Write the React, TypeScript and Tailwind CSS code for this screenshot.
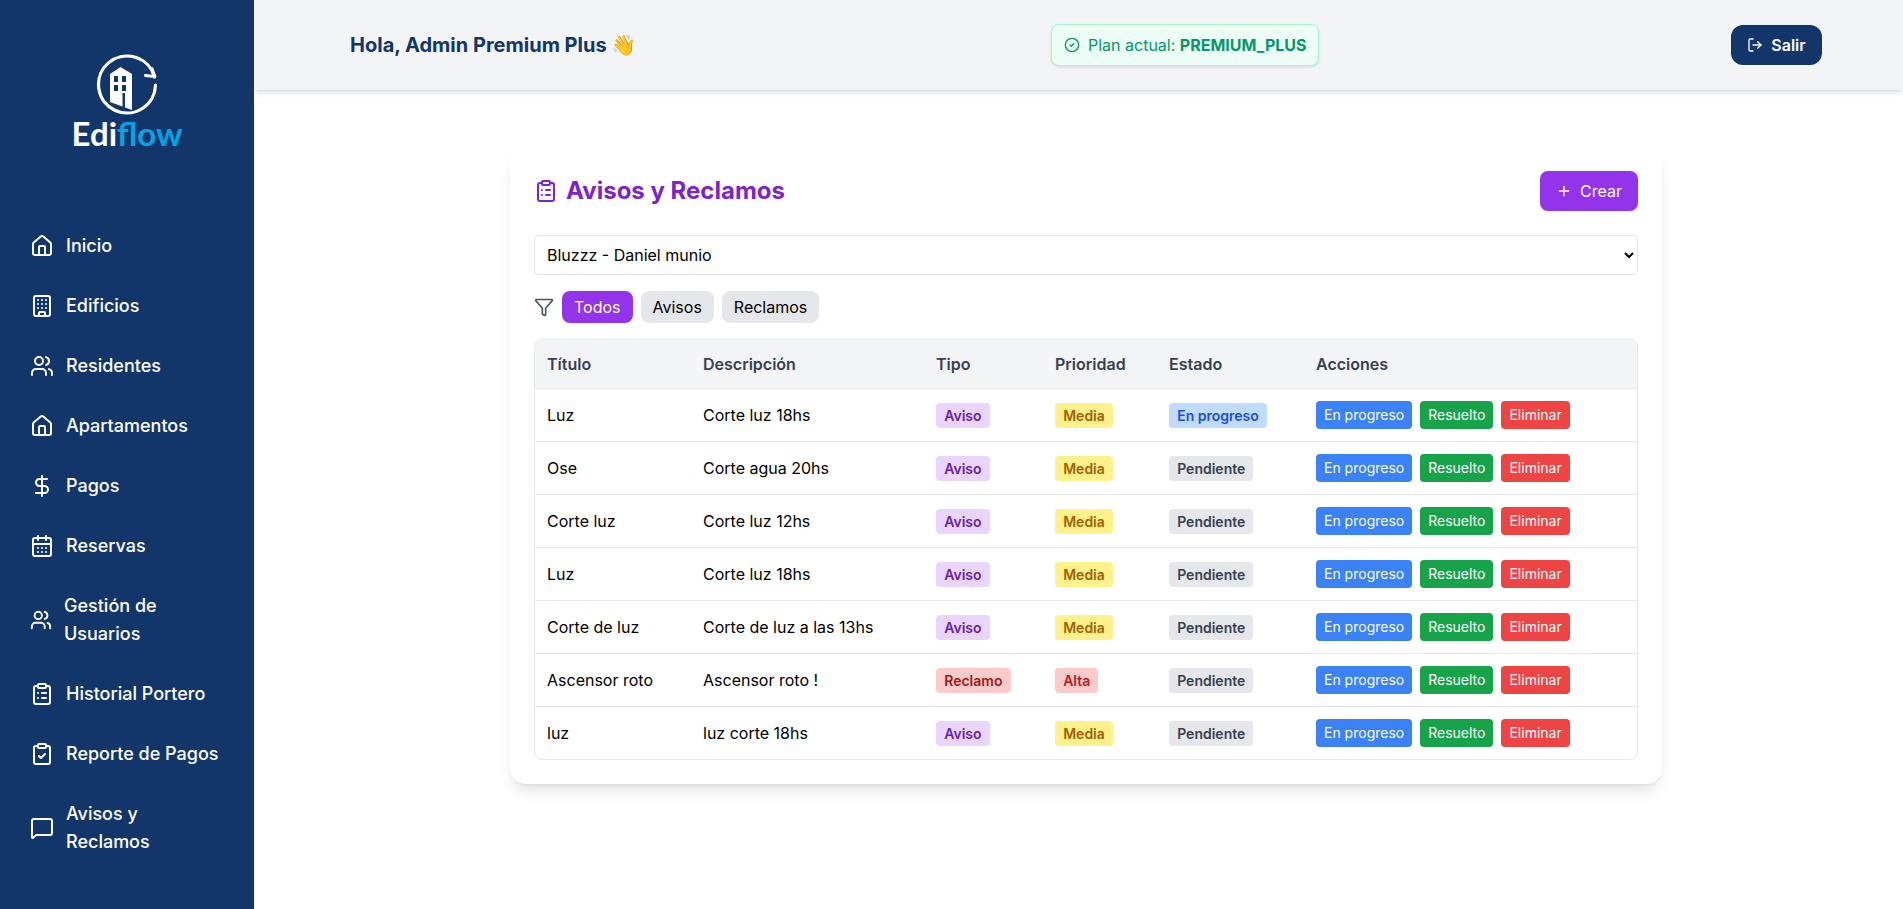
import { Building, CalendarDays, CircleCheck, ClipboardCheck, ClipboardList, DollarSign, Funnel, House, LogOut, MessageSquare, Plus, Users } from "lucide-react"
import type { ReactNode } from "react"

const navItems: { icon: ReactNode; label: ReactNode; tall?: boolean }[] = [
  { icon: <House size={24} />, label: "Inicio" },
  { icon: <Building size={24} />, label: "Edificios" },
  { icon: <Users size={24} />, label: "Residentes" },
  { icon: <House size={24} />, label: "Apartamentos" },
  { icon: <DollarSign size={24} />, label: "Pagos" },
  { icon: <CalendarDays size={24} />, label: "Reservas" },
  {
    icon: <Users size={22} />,
    label: (
      <>
        Gestión de
        <br />
        Usuarios
      </>
    ),
    tall: true,
  },
  { icon: <ClipboardList size={24} />, label: "Historial Portero" },
  { icon: <ClipboardCheck size={24} />, label: "Reporte de Pagos" },
  {
    icon: <MessageSquare size={24} />,
    label: (
      <>
        Avisos y
        <br />
        Reclamos
      </>
    ),
    tall: true,
  },
]

const tipoStyles: Record<string, string> = {
  Aviso: "bg-[#e9d5ff] text-[#6b21a8]",
  Reclamo: "bg-[#fecaca] text-[#991b1b]",
}

const prioridadStyles: Record<string, string> = {
  Media: "bg-[#fef08a] text-[#a16207]",
  Alta: "bg-[#fecaca] text-[#b91c1c]",
}

const estadoStyles: Record<string, string> = {
  "En progreso": "bg-[#bfdbfe] text-[#1d4ed8]",
  Pendiente: "bg-[#e5e7eb] text-[#374151]",
}

const rows = [
  { titulo: "Luz", descripcion: "Corte luz 18hs", tipo: "Aviso", prioridad: "Media", estado: "En progreso" },
  { titulo: "Ose", descripcion: "Corte agua 20hs", tipo: "Aviso", prioridad: "Media", estado: "Pendiente" },
  { titulo: "Corte luz", descripcion: "Corte luz 12hs", tipo: "Aviso", prioridad: "Media", estado: "Pendiente" },
  { titulo: "Luz", descripcion: "Corte luz 18hs", tipo: "Aviso", prioridad: "Media", estado: "Pendiente" },
  { titulo: "Corte de luz", descripcion: "Corte de luz a las 13hs", tipo: "Aviso", prioridad: "Media", estado: "Pendiente" },
  { titulo: "Ascensor roto", descripcion: "Ascensor roto !", tipo: "Reclamo", prioridad: "Alta", estado: "Pendiente" },
  { titulo: "luz", descripcion: "luz corte 18hs", tipo: "Aviso", prioridad: "Media", estado: "Pendiente" },
]

function Badge({ text, className }: { text: string; className: string }) {
  return <span className={`mt-px block h-[25px] w-fit rounded px-[8.2px] text-sm leading-[25px] font-semibold ${className}`}>{text}</span>
}

function Logo() {
  return (
    <div className="flex flex-col items-center">
      <svg width="64" height="64" viewBox="0 0 64 64" fill="none">
        <path d="M60.5 31 A28.5 28.5 0 1 1 59.5 23" stroke="white" strokeWidth="3.2" strokeLinecap="round" />
        <path d="M50.3 21.5 L60 22.5 L57 14.5" stroke="white" strokeWidth="2.8" strokeLinecap="round" strokeLinejoin="round" />
        <path d="M15 20 L25.5 13 L37 20 L37 56 L15 48 Z" fill="white" />
        <rect x="19" y="22" width="4" height="6" fill="#12366a" />
        <rect x="27" y="22" width="4" height="6" fill="#12366a" />
        <rect x="19" y="31" width="4" height="6" fill="#12366a" />
        <rect x="27" y="31" width="4" height="6" fill="#12366a" />
        <rect x="27.5" y="39" width="2.5" height="17" fill="#12366a" />
      </svg>
      <div className="font-[Lato,sans-serif] text-[33px] leading-[30px] font-bold">
        <span className="text-white">Edi</span>
        <span className="text-[#00a5e5]">flow</span>
      </div>
    </div>
  )
}

export default function App() {
  return (
    <div className="flex min-h-[909px] bg-white font-[Inter,sans-serif] text-black">
      <aside className="flex w-[254px] shrink-0 flex-col bg-[#12366a] pt-[54px] text-white">
        <Logo />
        <nav className="mt-[76px] flex flex-col gap-4 pl-[30px]">
          {navItems.map((item, i) => (
            <div key={i} className={`flex items-center gap-3 ${item.tall ? "h-[72px]" : "h-11"}`}>
              {item.icon}
              <span className="text-lg leading-7 font-medium whitespace-nowrap">{item.label}</span>
            </div>
          ))}
        </nav>
      </aside>

      <div className="flex min-w-0 flex-1 flex-col">
        <header className="flex h-[90px] items-center bg-[#f3f4f6] pr-[81px] pl-[96px] shadow-md">
          <h2 className="w-[701px] text-xl font-bold text-[#12366a]">Hola, Admin Premium Plus 👋</h2>
          <div className="flex h-[42px] items-center gap-2 rounded-lg border border-[#a7f3d0] bg-[#ecfdf5] px-3 whitespace-nowrap text-[#059669] shadow-sm">
            <CircleCheck size={16} />
            <span>
              Plan actual: <span className="font-bold">PREMIUM_PLUS</span>
            </span>
          </div>
          <button className="ml-auto flex h-10 w-[91px] items-center justify-center gap-2 rounded-xl bg-[#12366a] font-semibold text-white">
            <LogOut size={16} />
            Salir
          </button>
        </header>

        <main className="pt-[57px] pl-[256px]">
          <div className="w-[1152px] rounded-2xl bg-white p-6 shadow-lg">
            <div className="mb-6 flex h-10 items-center justify-between">
              <h1 className="flex items-center gap-2 text-2xl font-bold text-[#7e22ce]">
                <ClipboardList size={24} />
                Avisos y Reclamos
              </h1>
              <button className="flex h-10 w-[98px] items-center justify-center gap-2 rounded-lg bg-[#9333ea] text-white">
                <Plus size={16} />
                Crear
              </button>
            </div>

            <select className="mb-4 h-10 w-full rounded border border-[#e5e7eb] bg-white px-2">
              <option>Bluzzz - Daniel munio</option>
            </select>

            <div className="mb-4 flex items-center gap-2">
              <Funnel size={20} className="text-[#4b5563]" />
              <button className="h-8 rounded-lg bg-[#9333ea] px-3 text-white">Todos</button>
              <button className="h-8 rounded-lg bg-[#e5e7eb] px-3">Avisos</button>
              <button className="h-8 rounded-lg bg-[#e5e7eb] px-3">Reclamos</button>
            </div>

            <div className="overflow-hidden rounded-lg border border-[#e5e7eb]">
              <table className="w-full table-fixed text-left">
                <thead className="bg-[#f3f4f6] text-[#374151]">
                  <tr className="h-12">
                    <th className="w-[156px] px-3 font-semibold">Título</th>
                    <th className="w-[233px] px-3 font-semibold">Descripción</th>
                    <th className="w-[119px] px-3 font-semibold">Tipo</th>
                    <th className="w-[114px] px-3 font-semibold">Prioridad</th>
                    <th className="w-[147px] px-3 font-semibold">Estado</th>
                    <th className="px-3 font-semibold">Acciones</th>
                  </tr>
                </thead>
                <tbody>
                  {rows.map((row, i) => (
                    <tr key={i} className="h-[53px] border-t border-[#e5e7eb]">
                      <td className="px-3">{row.titulo}</td>
                      <td className="px-3">{row.descripcion}</td>
                      <td className="px-3">
                        <Badge text={row.tipo} className={tipoStyles[row.tipo]} />
                      </td>
                      <td className="px-3">
                        <Badge text={row.prioridad} className={prioridadStyles[row.prioridad]} />
                      </td>
                      <td className="px-3">
                        <Badge text={row.estado} className={estadoStyles[row.estado]} />
                      </td>
                      <td className="px-3">
                        <div className="flex gap-2 text-sm text-white">
                          <button className="h-7 rounded bg-[#3b82f6] px-2">En progreso</button>
                          <button className="h-7 rounded bg-[#16a34a] px-2">Resuelto</button>
                          <button className="h-7 rounded bg-[#ef4444] px-2">Eliminar</button>
                        </div>
                      </td>
                    </tr>
                  ))}
                </tbody>
              </table>
            </div>
          </div>
        </main>
      </div>
    </div>
  )
}
